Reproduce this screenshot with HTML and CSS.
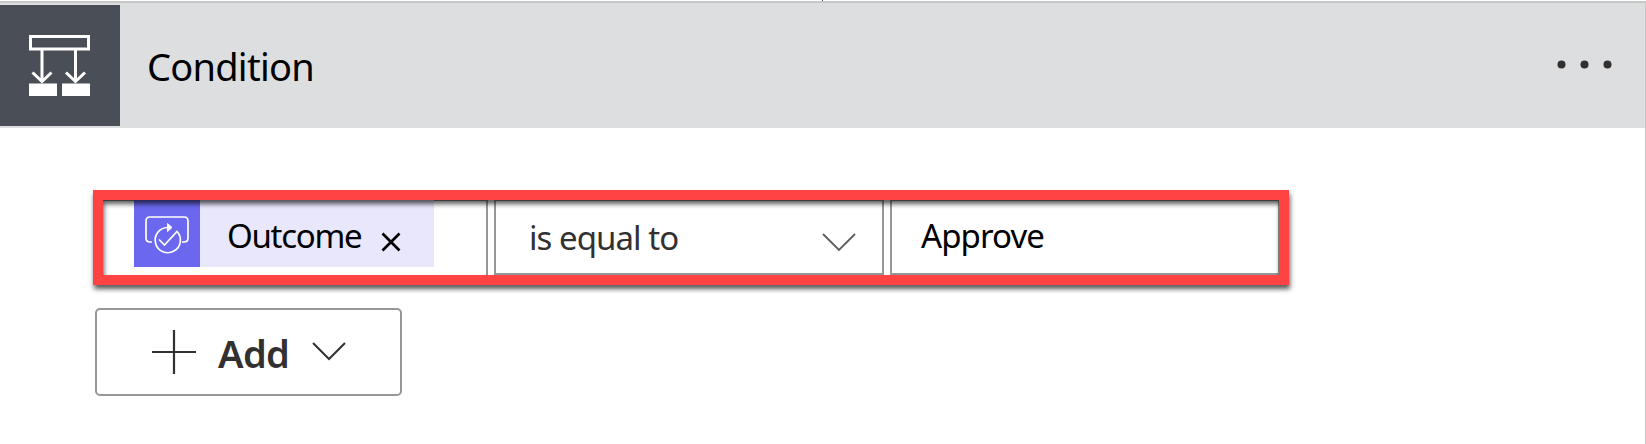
FILE: index.html
```html
<!DOCTYPE html>
<html lang="en">
<head>
<meta charset="utf-8">
<title>Condition</title>
<link rel="stylesheet" href="styles.css">
</head>
<body>
<main class="card">
  <span class="connector"></span>
  <header class="header">
    <div class="tile">
      <svg width="120" height="121" viewBox="0 5 120 121" fill="none" stroke="#fff" stroke-width="3">
        <rect x="30.500" y="36.500" width="58" height="12.500"/>
        <path d="M42 50v31M75.500 50v31M32.500 72.500l9.500 9 9.500-9M66 72.500l9.500 9 9.500-9"/>
        <path d="M29 83.500h28v12.500h-28zM62 83.500h28v12.500h-28z" fill="#fff" stroke="none"/>
      </svg>
    </div>
    <h1 class="title">Condition</h1>
    <svg class="dots" width="56" height="10" viewBox="0 0 56 10" fill="#323130">
      <circle cx="5.500" cy="5.500" r="4"/><circle cx="28.500" cy="5.500" r="4"/><circle cx="51.500" cy="5.500" r="4"/>
    </svg>
  </header>
  <section class="body">
    <div class="row">
      <div class="field operand">
        <div class="token">
          <svg class="token-icon" width="66" height="67" viewBox="134 200 66 67" fill="none" stroke="#fff" stroke-width="1.700">
            <path d="M152 242h-2q-4 0-4-4v-17q0-4 4-4h34q4 0 4 4v17q0 4-4 4h-2"/>
            <path d="M167.500 227.500A12.600 12.600 0 1 0 177 231.500L164.500 245l-5.500-5.500"/>
            <path d="M167.500 223.500l4.500 4-4.500 4z" fill="#fff" stroke-width="1"/>
          </svg>
          <span class="token-label">Outcome</span>
          <svg class="close" width="20" height="20" viewBox="0 0 20 20" stroke="#000" stroke-width="2.700"><path d="M1.500 1.500l17 17M18.500 1.500l-17 17"/></svg>
        </div>
      </div>
      <div class="field select">
        <span class="operator">is equal to</span>
        <svg class="chevron" width="34" height="20" viewBox="0 0 34 20" fill="none" stroke="#605e5c" stroke-width="1.800"><path d="M1 2l16 16L33 2"/></svg>
      </div>
      <div class="field value"><span class="value-text">Approve</span></div>
      <div class="highlight"></div>
    </div>
    <button class="add" type="button">
      <svg class="plus" width="44" height="44" viewBox="0 0 44 44" stroke="#323130" stroke-width="2.200"><path d="M22 0v44M0 22h44"/></svg>
      <span class="add-label">Add</span>
      <svg class="add-chevron" width="34" height="20" viewBox="0 0 34 20" fill="none" stroke="#323130" stroke-width="2"><path d="M1 2l16 16L33 2"/></svg>
    </button>
  </section>
</main>
</body>
</html>
```
FILE: styles.css
```css
* { box-sizing: border-box; }
body {
  margin: 0;
  padding-top: 1px;
  height: 444px;
  overflow: hidden;
  background: #fff;
  color: #000;
  font-family: "Segoe UI", "Noto Sans", "Open Sans", sans-serif;
}
.card {
  height: 443px;
  border-top: 2px solid #c6c7c7;
  border-right: 1px solid #c6c6c6;
}
.connector {
  position: absolute;
  top: 0;
  left: 822px;
  width: 1px;
  height: 1px;
  background: #484644;
}
.header {
  display: flex;
  height: 125px;
  padding-top: 2px;
  background: #dddee0;
}
.tile { width: 120px; height: 121px; background: #4a4e57; }
.tile svg { display: block; }
.title {
  margin: 0 0 0 27px;
  padding-top: 33px;
  font-size: 38px;
  line-height: 56px;
  font-weight: 400;
  letter-spacing: -0.75px;
}
.dots { margin: 54px 33px 0 auto; }
.body { padding: 71px 0 0 95px; }
.row { position: relative; display: flex; gap: 6px; width: 1185px; height: 76px; }
.field { display: flex; border: 2px solid #979797; }
.operand { width: 393px; padding-left: 37px; border-bottom: 0; }
.select { width: 390px; padding-left: 33px; }
.value { width: 390px; padding-left: 29px; }
.token { display: flex; width: 300px; height: 67px; margin-top: -1px; background: #e9e7fc; }
.token-icon { background: #6b68ef; }
.token-label { width: 135px; margin: 13px 0 0 27px; font-size: 33px; line-height: 45px; letter-spacing: -1.3px; }
.close { margin: 32px 0 0 19px; }
.operator, .value-text { font-size: 33px; line-height: 45px; }
.operator { width: 293px; margin-top: 14px; color: #323130; letter-spacing: -0.95px; }
.value-text { margin-top: 12px; letter-spacing: -0.9px; }
.chevron { margin-top: 31px; }
.highlight {
  position: absolute;
  top: -9px;
  left: -2px;
  width: 1196px;
  height: 95px;
  border: 10px solid #ff4343;
  filter: drop-shadow(1px 4px 2.5px rgba(0, 0, 0, .65));
}
.add {
  display: flex;
  width: 307px;
  height: 88px;
  margin-top: 33px;
  padding: 0 0 0 55px;
  border: 2px solid #979797;
  border-radius: 5px;
  background: #fff;
  color: #323130;
  font-family: inherit;
}
.plus { margin-top: 20px; }
.add-label { width: 74px; margin: 16px 0 0 22px; text-align: left; font-size: 38px; line-height: 54px; font-weight: 600; letter-spacing: -0.6px; }
.add-chevron { margin: 31px 0 0 20px; }
```
